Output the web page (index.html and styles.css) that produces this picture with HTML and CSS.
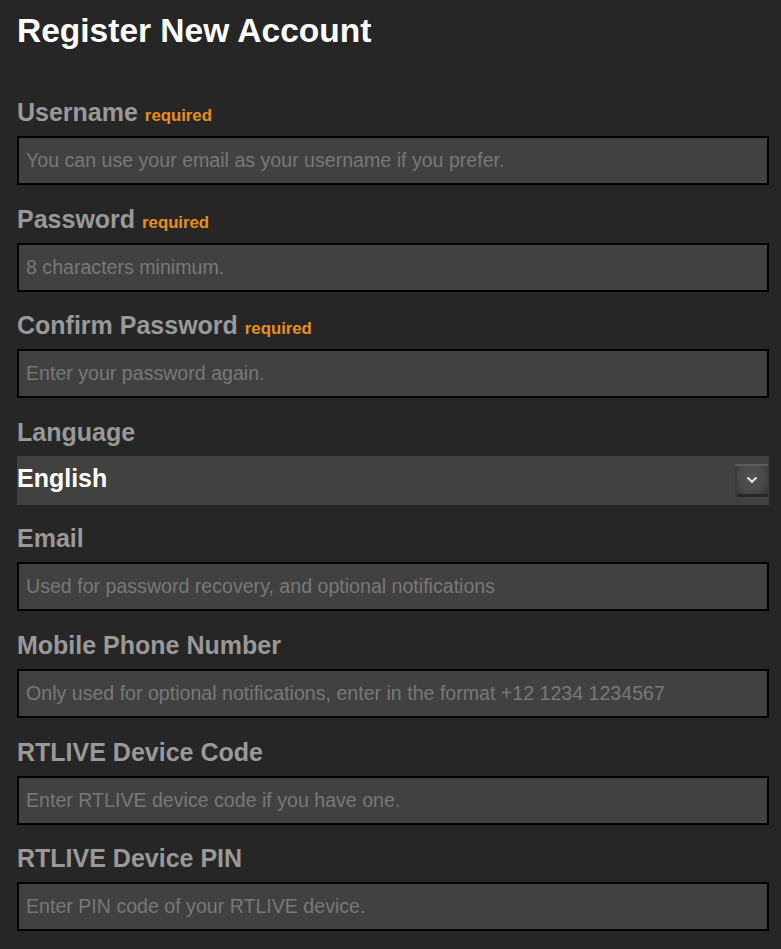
FILE: index.html
```html
<!DOCTYPE html>
<html lang="en">
<head>
    <meta charset="UTF-8">
    <meta name="viewport" content="width=device-width, initial-scale=1.0">
    <title>Register New Account</title>
    <link rel="stylesheet" href="styles.css">
</head>
<body>
    <div class="page">
        <h1 class="title">Register New Account</h1>

        <form class="register-form">
            <div class="field">
                <label class="field-label" for="username">Username <span class="req">required</span></label>
                <input class="field-input" id="username" type="text" placeholder="You can use your email as your username if you prefer.">
            </div>

            <div class="field">
                <label class="field-label" for="password">Password <span class="req">required</span></label>
                <input class="field-input" id="password" type="password" placeholder="8 characters minimum.">
            </div>

            <div class="field">
                <label class="field-label" for="confirm">Confirm Password <span class="req">required</span></label>
                <input class="field-input" id="confirm" type="password" placeholder="Enter your password again.">
            </div>

            <div class="field">
                <label class="field-label" for="language">Language</label>
                <div class="select-wrap">
                    <select class="field-select" id="language">
                        <option>English</option>
                    </select>
                    <span class="select-btn">
                        <svg width="12" height="8" viewBox="0 0 12 8"><path d="M1.5 1.5 L6 5.8 L10.5 1.5" fill="none" stroke="#e6e6e6" stroke-width="2"/></svg>
                    </span>
                </div>
            </div>

            <div class="field">
                <label class="field-label" for="email">Email</label>
                <input class="field-input" id="email" type="text" placeholder="Used for password recovery, and optional notifications">
            </div>

            <div class="field">
                <label class="field-label" for="phone">Mobile Phone Number</label>
                <input class="field-input" id="phone" type="text" placeholder="Only used for optional notifications, enter in the format +12 1234 1234567">
            </div>

            <div class="field">
                <label class="field-label" for="devcode">RTLIVE Device Code</label>
                <input class="field-input" id="devcode" type="text" placeholder="Enter RTLIVE device code if you have one.">
            </div>

            <div class="field">
                <label class="field-label" for="devpin">RTLIVE Device PIN</label>
                <input class="field-input" id="devpin" type="text" placeholder="Enter PIN code of your RTLIVE device.">
            </div>
        </form>
    </div>
</body>
</html>
```

FILE: styles.css
```css
body {
    margin: 0;
    padding: 0;
    background-color: #262626;
    font-family: 'Liberation Sans', Arial, sans-serif;
}

.page {
    padding: 0 12px 0 17px;
}

.title {
    margin: 11px 0 46px 0;
    font-size: 33.5px;
    line-height: 40px;
    font-weight: bold;
    color: #ffffff;
}

.register-form {
    margin: 0;
}

.field {
    margin-bottom: 18.6px;
}

.field-label {
    display: block;
    height: 30px;
    margin-bottom: 9px;
    font-size: 25px;
    line-height: 30px;
    font-weight: bold;
    color: #999999;
}

.req {
    font-size: 16.75px;
    line-height: 1;
    color: #e8901c;
}

.field-input {
    display: block;
    box-sizing: border-box;
    width: 100%;
    height: 49px;
    margin: 0;
    padding: 0 7px;
    border: 2px solid #000000;
    background-color: #414141;
    color: #dddddd;
    font-family: 'Liberation Sans', Arial, sans-serif;
    font-size: 19.6px;
    outline: none;
}

.field-input::placeholder {
    color: #787878;
}

.select-wrap {
    display: flex;
    align-items: center;
    height: 49px;
    background-color: #414141;
}

.field-select {
    flex: 1;
    height: 100%;
    margin: 0;
    padding: 0 0 4px 0;
    border: none;
    background: transparent;
    color: #ffffff;
    font-family: 'Liberation Sans', Arial, sans-serif;
    font-size: 25px;
    font-weight: bold;
    appearance: none;
    -webkit-appearance: none;
    outline: none;
}

.select-btn {
    display: flex;
    align-items: center;
    justify-content: center;
    width: 33px;
    height: 33px;
    margin-right: 1px;
    background: radial-gradient(ellipse at 50% 40%, #545454 0%, #484848 55%, #333333 100%);
    box-shadow: inset 0 2px 0 #5e5e5e, inset 2px 0 0 #3a3a3a, inset 0 -3px 0 #262626;
}
```
